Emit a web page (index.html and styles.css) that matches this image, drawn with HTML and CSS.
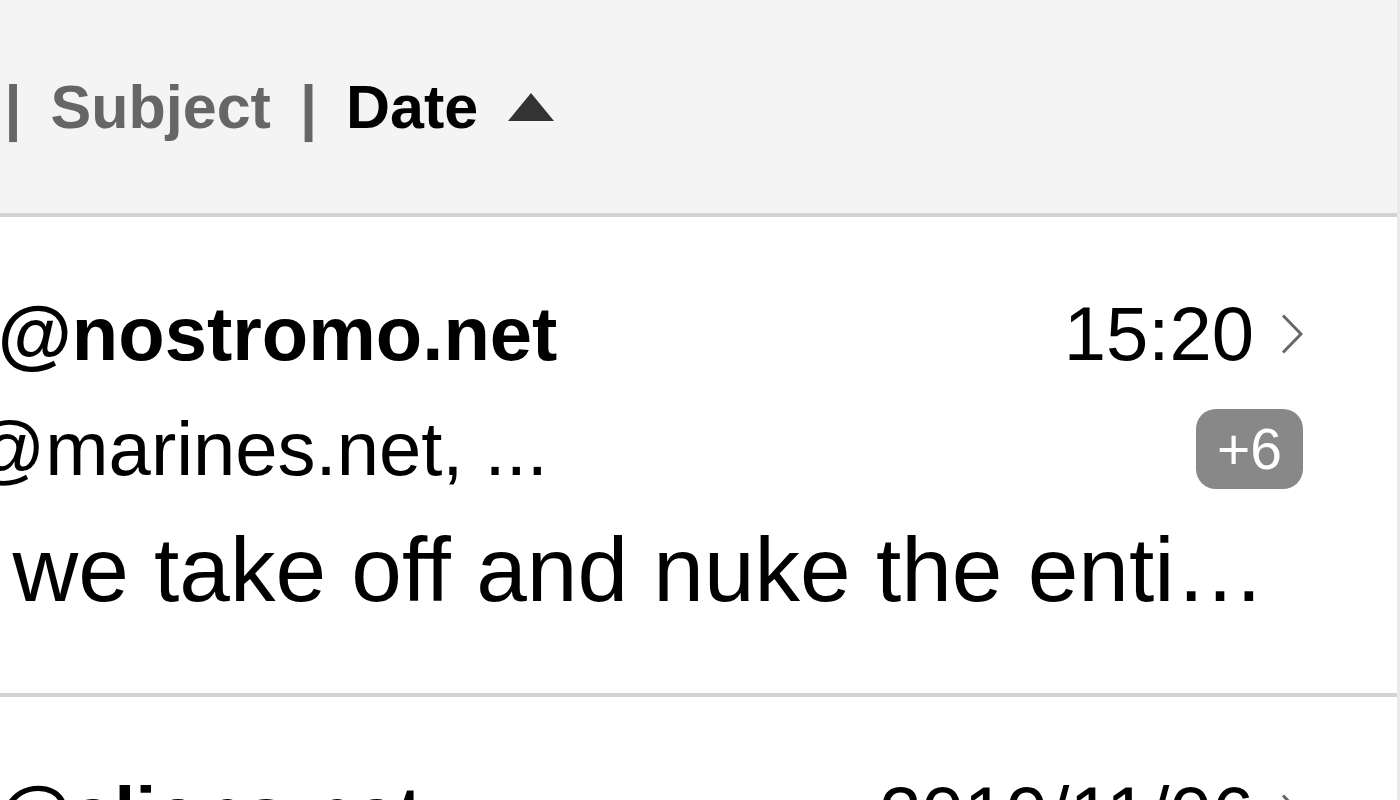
FILE: index.html
```html
<!DOCTYPE html>
<html lang="en">
<head>
<meta charset="utf-8">
<title>Inbox</title>
<link rel="stylesheet" href="styles.css">
</head>
<body>
<div class="list">
  <div class="header">
    <span class="col">From</span>
    <span class="sep">|</span>
    <span class="col">Subject</span>
    <span class="sep">|</span>
    <span class="col active">Date</span>
    <svg class="sort" width="46" height="28" viewBox="0 0 46 28" aria-hidden="true"><polygon points="0,28 23,0 46,28" fill="#333"/></svg>
  </div>

  <div class="row">
    <div class="line top">
      <span class="from">ripley@nostromo.net</span>
      <span class="date">15:20</span>
      <svg class="chev" width="22" height="40" viewBox="0 0 22 40" aria-hidden="true"><polyline points="2,1.5 20,20 2,38.5" fill="none" stroke="#666" stroke-width="3"/></svg>
    </div>
    <div class="line to">
      <span class="rcpt">hicks@marines.net, ...</span>
      <span class="badge">+6</span>
    </div>
    <div class="line subject">I say we take off and nuke the entire site from orbit. It's the only way to be sure.</div>
  </div>

  <div class="row">
    <div class="line top">
      <span class="from">ripley@aliens.net</span>
      <span class="date">2019/11/06</span>
      <svg class="chev" width="22" height="40" viewBox="0 0 22 40" aria-hidden="true"><polyline points="2,1.5 20,20 2,38.5" fill="none" stroke="#666" stroke-width="3"/></svg>
    </div>
    <div class="line to">
      <span class="rcpt">vasquez@marines.net, ...</span>
      <span class="badge">+2</span>
    </div>
    <div class="line subject">Game over, man! Game over! What the hell are we gonna do now?</div>
  </div>
</div>
</body>
</html>
```

FILE: styles.css
```css
html, body {
  margin: 0;
  padding: 0;
  height: 800px;
  overflow: hidden;
  background: #ffffff;
}

body {
  font-family: "Liberation Sans", Arial, sans-serif;
  color: #000;
}

.list {
  margin-left: -205px;
  width: 1602px;
  border-right: 3px solid #e9e9e9;
}

.header {
  display: flex;
  align-items: center;
  gap: 29px;
  height: 213px;
  padding-left: 28px;
  background: #f4f4f4;
  border-bottom: 4px solid #d3d3d3;
  font-size: 61px;
  font-weight: bold;
  color: #666;
  white-space: nowrap;
}

.header .active {
  color: #000;
}

.header .sort {
  margin-left: 1px;
  display: block;
}

.row {
  padding: 73px 94px 70px 0;
  border-bottom: 4px solid #d3d3d3;
}

.line {
  display: flex;
  align-items: center;
  white-space: nowrap;
}

.line.top {
  font-size: 76px;
  line-height: 88px;
}

.from {
  flex: 1;
  font-weight: bold;
  overflow: hidden;
  text-overflow: ellipsis;
}

.date {
  margin-left: 20px;
}

.chev {
  display: block;
  margin-left: 27px;
}

.line.to {
  margin-top: 27px;
  font-size: 76px;
  line-height: 88px;
}

.rcpt {
  flex: 1;
  overflow: hidden;
  text-overflow: ellipsis;
}

.badge {
  margin-left: 20px;
  height: 80px;
  padding: 0 21px;
  border-radius: 20px;
  background: #888;
  color: #fff;
  font-size: 57px;
  line-height: 80px;
}

.line.subject {
  display: block;
  margin-top: 24px;
  padding-right: 20px;
  font-size: 91px;
  line-height: 106px;
  overflow: hidden;
  text-overflow: ellipsis;
}
```
